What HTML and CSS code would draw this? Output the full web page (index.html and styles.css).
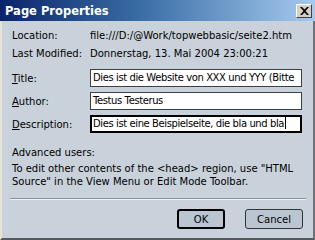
FILE: index.html
```html
<!DOCTYPE html>
<html>
<head>
<meta charset="utf-8">
<link rel="stylesheet" href="styles.css">
</head>
<body>
<div class="window">
  <div class="titlebar">
    <span class="title">Page Properties</span>
    <span class="close"><svg width="9" height="8" viewBox="0 0 9 8"><path d="M0 0h2l2.5 2.5L7 0h2L5.5 4 9 8H7L4.5 5.5 2 8H0l3.5-4z" fill="#000"/></svg></span>
  </div>
  <div class="content">
    <div class="info">
      <span class="lbl">Location:</span><span>file:///D:/@Work/topwebbasic/seite2.htm</span>
      <span class="lbl">Last Modified:</span><span>Donnerstag, 13. Mai 2004 23:00:21</span>
    </div>
    <div class="fields">
      <label class="lbl"><u>T</u>itle:</label><div class="input">Dies ist die Website von XXX und YYY (Bitte</div>
      <label class="lbl"><u>A</u>uthor:</label><div class="input">Testus Testerus</div>
      <label class="lbl"><u>D</u>escription:</label><div class="input focus">Dies ist eine Beispielseite, die bla und bla<span class="caret"></span></div>
    </div>
    <div class="adv">
      <p class="advhead">Advanced users:</p>
      <p>To edit other contents of the &lt;head&gt; region, use "HTML Source" in the View Menu or Edit Mode Toolbar.</p>
    </div>
    <div class="sep"></div>
    <div class="buttons">
      <button class="btn default">OK</button>
      <button class="btn">Cancel</button>
    </div>
  </div>
</div>
</body>
</html>
```
FILE: styles.css
```css
html, body { margin: 0; padding: 0; }
body { width: 315px; height: 240px; overflow: hidden; background: #c9d1da; }
.window {
  width: 315px; height: 240px; box-sizing: border-box;
  border-left: 2px solid #e6e2d6;
  border-right: 2px solid #6e7278;
  border-bottom: 2px solid #55585c;
  background: #c9d1da;
  font-family: "DejaVu Sans", Verdana, sans-serif;
  font-size: 10px;
  color: #000;
  display: flex; flex-direction: column;
}
.titlebar {
  height: 21px; margin-left: -2px; margin-right: -2px;
  background: linear-gradient(to right, #0a246a 0%, #3a6ea5 45%, #a6caf0 100%);
  display: flex; align-items: center; justify-content: space-between;
  padding: 0 3px 0 5px;
}
.title { color: #fff; font-weight: bold; font-size: 11.5px; }
.close {
  width: 16px; height: 14px; box-sizing: border-box;
  background: #d4d0c8;
  border: 1px solid; border-color: #fff #404040 #404040 #fff;
  display: flex; align-items: center; justify-content: center;
}
.content { padding: 8px 9px 0 10px; flex: 1; display: flex; flex-direction: column; }
.info { display: grid; grid-template-columns: 78px 1fr; row-gap: 5px; line-height: 13px; }
.fields { display: grid; grid-template-columns: 78px 212px; row-gap: 5px; margin-top: 9px; align-items: center; }
.input {
  height: 18px; box-sizing: border-box; background: #fff;
  border: 1px solid #3c4046; padding: 0 2px; line-height: 16px;
  white-space: nowrap; overflow: hidden; letter-spacing: -0.4px;
}
.input.focus { border: 2px solid #000; line-height: 14px; padding-left: 1px; }
.caret { display: inline-block; width: 1px; height: 12px; background: #000; vertical-align: -2px; margin-left: 1px; }
.adv { margin-top: 13px; line-height: 13px; }
.adv p { margin: 0; }
.advhead { margin-bottom: 3px !important; }
.sep { height: 0; border-top: 1px solid #8a9098; border-bottom: 1px solid #f0f2f4; margin: 10px -2px 0 -2px; }
.buttons { display: flex; justify-content: flex-end; gap: 20px; margin-top: 9px; padding-right: 1px; }
.btn {
  height: 20px; box-sizing: border-box;
  font-family: inherit; font-size: 10px; color: #000;
  background: #bac5d1;
  border: 1px solid #30343a; border-radius: 3px;
  padding: 0;
}
.btn.default { width: 48px; border: 2px solid #000; }
.btn:not(.default) { width: 58px; }
```
